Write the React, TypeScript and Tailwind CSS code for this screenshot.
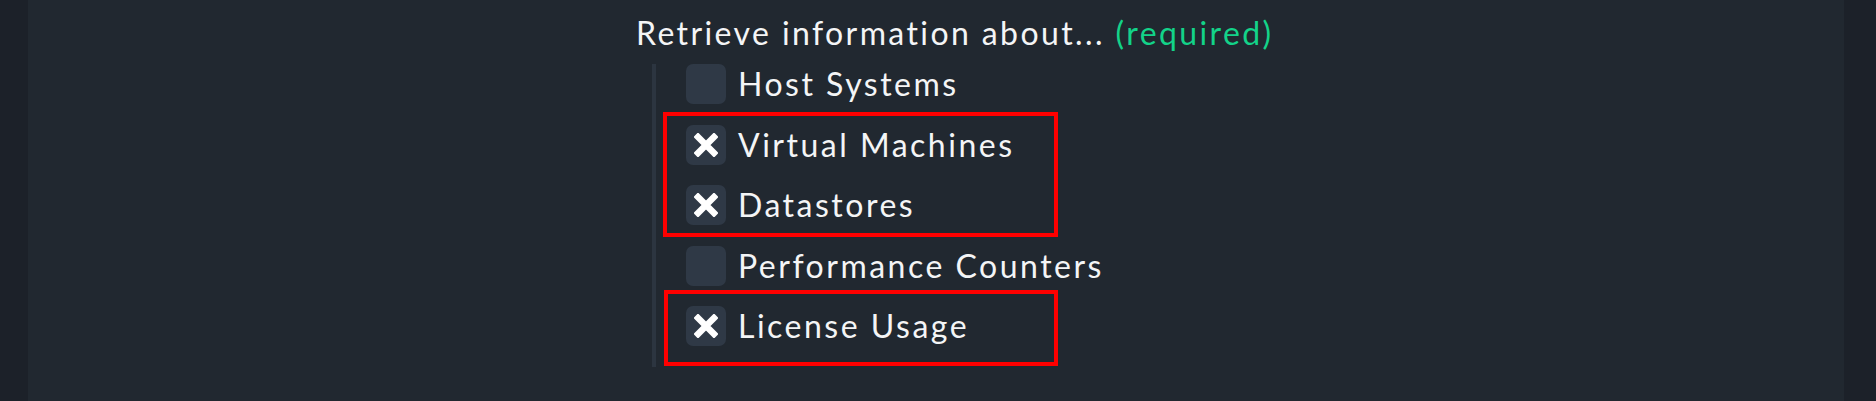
const options = [
    { label: 'Host Systems', checked: false },
    { label: 'Virtual Machines', checked: true },
    { label: 'Datastores', checked: true },
    { label: 'Performance Counters', checked: false },
    { label: 'License Usage', checked: true },
];

function Cross() {
    return (
        <svg width="24" height="24" viewBox="0 0 24 24" className="block">
            <path d="M4 4 L20 20 M20 4 L4 20" stroke="#ffffff" strokeWidth="6.5" strokeLinecap="square" />
        </svg>
    );
}

function CheckRow({ label, checked }: { label: string; checked: boolean }) {
    return (
        <div className="flex items-center gap-[12px] h-[40px]">
            <span className="flex items-center justify-center w-[40px] h-[40px] rounded-[7px] bg-[#2f3946]">
                {checked && <Cross />}
            </span>
            <span className="text-[32px] leading-[38px] tracking-[2.5px] text-[#f4f5f6]">{label}</span>
        </div>
    );
}

export default function App() {
    return (
        <div className="flex w-full h-[401px] bg-[#212830] font-['Lato','Noto_Sans',sans-serif]">
            <div className="w-[28px] bg-[#1c2129]" />
            <div className="flex-1 pl-[608px] pt-[14px]">
                <h2 className="text-[32px] leading-[38px] tracking-[2.4px] text-[#f4f5f6] font-normal">
                    Retrieve information about... <span className="text-[#13d389]">(required)</span>
                </h2>
                <div className="relative ml-[16px] mt-[12px] border-l-[4px] border-[#2c3540] pl-[30px] pb-[21px] flex flex-col gap-[20.5px]">
                    {options.map((o) => (
                        <CheckRow key={o.label} label={o.label} checked={o.checked} />
                    ))}
                    <div className="absolute left-[7px] top-[48px] w-[395px] h-[125px] border-[4px] border-[#ff0000]" />
                    <div className="absolute left-[8px] top-[226px] w-[394px] h-[76px] border-[4px] border-[#ff0000]" />
                </div>
            </div>
            <div className="w-[32px] bg-[#1c2129]" />
        </div>
    );
}
